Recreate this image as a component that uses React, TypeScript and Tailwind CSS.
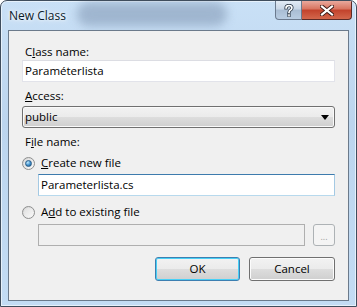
import React from "react";

const font = { fontFamily: '"Open Sans", "Noto Sans", sans-serif' };

function Radio({ checked }: { checked?: boolean }) {
  return (
    <span className="relative flex h-[13px] w-[13px] items-center justify-center rounded-full border border-[#8e8f8f] bg-gradient-to-br from-[#d4d4d4] to-[#fbfbfb]">
      <span className="h-[9px] w-[9px] rounded-full bg-gradient-to-br from-[#e0e0e0] to-[#f8f8f8]" />
      {checked && (
        <span className="absolute h-[7px] w-[7px] rounded-full border border-[#2a5d88] bg-[radial-gradient(circle_at_35%_30%,#bfeaff,#3f8fcc_55%,#1a4f7e)]" />
      )}
    </span>
  );
}

function Btn({ children, primary }: { children: React.ReactNode; primary?: boolean }) {
  return (
    <button
      type="button"
      className={
        primary
          ? "h-[24px] w-[85px] rounded-[3px] border border-[#3c7fb1] text-[11.5px] text-black shadow-[inset_0_0_0_1px_#48d0f6] bg-[linear-gradient(#f2f2f2_0%,#ebebeb_50%,#dddddd_51%,#cfcfcf_100%)]"
          : "h-[24px] w-[86px] rounded-[3px] border border-[#707070] text-[11.5px] text-black shadow-[inset_0_0_0_1px_#fcfcfc] bg-[linear-gradient(#f2f2f2_0%,#ebebeb_50%,#dddddd_51%,#cfcfcf_100%)]"
      }
    >
      {children}
    </button>
  );
}

export default function App() {
  return (
    <div style={font} className="h-[307px] w-[357px] text-[11.5px] leading-[16px] text-black">
      <div className="relative h-full w-full overflow-hidden rounded-t-[7px] border border-[#3f4d5d] bg-[linear-gradient(#c9e0f6,#bcd5ee_40%,#c3dcf4)] shadow-[inset_0_0_0_1px_#e6f1fb]">
        {/* blurred glass behind title */}
        <div className="absolute left-[76px] top-[1px] h-[24px] w-[150px] rounded-[12px] bg-[#8fa5c0] opacity-70 blur-[5px]" />

        {/* title bar */}
        <div className="relative flex h-[29px] items-start">
          <span className="ml-[8px] mt-[7px] text-[12px] text-[#0a1a2a] [text-shadow:0_0_6px_#ffffff,0_0_3px_#ffffff]">
            New Class
          </span>
          <div className="ml-auto mr-[4px] flex">
            <div className="flex h-[19px] w-[27px] items-center justify-center rounded-bl-[4px] border border-t-0 border-[#6b7a8e] bg-[linear-gradient(#e2ebf5,#c8d6e6_45%,#a9bdd4_50%,#b9cde2)]">
              <svg width="10" height="13" viewBox="0 0 10 13">
                <path d="M2 4 Q2 1.5 5 1.5 Q8 1.5 8 4 Q8 5.5 5.5 6.8 L5 8.5 M5 11 L5 11.6" fill="none" stroke="#33404f" strokeWidth="3.2" strokeLinecap="square" />
                <path d="M2 4 Q2 1.5 5 1.5 Q8 1.5 8 4 Q8 5.5 5.5 6.8 L5 8.5 M5 11 L5 11.6" fill="none" stroke="#ffffff" strokeWidth="1.6" strokeLinecap="square" />
              </svg>
            </div>
            <div className="flex h-[19px] w-[50px] items-center justify-center rounded-br-[4px] border border-l-0 border-t-0 border-[#5b2a26] bg-[linear-gradient(#e9a99d,#d8735f_45%,#c2422c_50%,#d3674c)]">
              <svg width="14" height="11" viewBox="0 0 14 11">
                <path d="M2 1.5 L12 9.5 M12 1.5 L2 9.5" stroke="#3b1a16" strokeWidth="4" strokeLinecap="square" />
                <path d="M2 1.5 L12 9.5 M12 1.5 L2 9.5" stroke="#ffffff" strokeWidth="2.2" strokeLinecap="square" />
              </svg>
            </div>
          </div>
        </div>

        {/* content panel */}
        <div className="relative mx-[7px] h-[271px] border border-[#6b7a8b] bg-[#f0f0f0]">
          <div className="flex flex-col pl-[13px] pr-[13px]">
            <label className="mt-[13px] h-[16px] pl-[3px]">
              C<span className="underline">l</span>ass name:
            </label>
            <div className="flex h-[22px] items-center border border-[#e2e3ea] border-t-[#dcdde3] bg-white pl-[2px]">
              Paraméterlista
            </div>

            <label className="mt-[6px] h-[16px] pl-[3px]">
              <span className="underline">A</span>ccess:
            </label>
            <div className="mt-[2px] flex h-[22px] items-center justify-between rounded-[3px] border border-[#707070] bg-[linear-gradient(#f2f2f2_0%,#ebebeb_50%,#dddddd_51%,#cfcfcf_100%)] pl-[2px] pr-[5px] shadow-[inset_0_0_0_1px_#fafafa]">
              <span>public</span>
              <svg width="8" height="5" viewBox="0 0 8 5">
                <path d="M0 0 H8 L4 5 Z" fill="#000" />
              </svg>
            </div>

            <label className="mt-[6px] h-[16px] pl-[3px]">
              F<span className="underline">i</span>le name:
            </label>
            <div className="mt-[5px] flex h-[16px] items-center">
              <Radio checked />
              <span className="ml-[6px]">
                <span className="underline">C</span>reate new file
              </span>
            </div>
            <div className="ml-[16px] mt-[3px] flex h-[22px] items-center border border-[#a4c9e3] border-b-[#b7d9ed] border-t-[#3d7bad] bg-white pl-[2px]">
              Parameterlista.cs
            </div>

            <div className="mt-[8px] flex h-[16px] items-center">
              <Radio />
              <span className="ml-[6px]">
                A<span className="underline">d</span>d to existing file
              </span>
            </div>
            <div className="ml-[16px] mt-[4px] flex h-[22px] items-center gap-[8px]">
              <div className="h-[22px] flex-1 border border-[#afafaf] bg-[#f0f0f0]" />
              <div className="flex h-[22px] w-[22px] items-end justify-center rounded-[3px] border border-[#adb2b5] bg-[#f4f4f4] pb-[4px] text-[9px] leading-none text-[#a0a0a0]">
                ...
              </div>
            </div>

            <div className="mt-[11px] flex justify-end gap-[9px]">
              <Btn primary>OK</Btn>
              <Btn>Cancel</Btn>
            </div>
          </div>
        </div>
      </div>
    </div>
  );
}
